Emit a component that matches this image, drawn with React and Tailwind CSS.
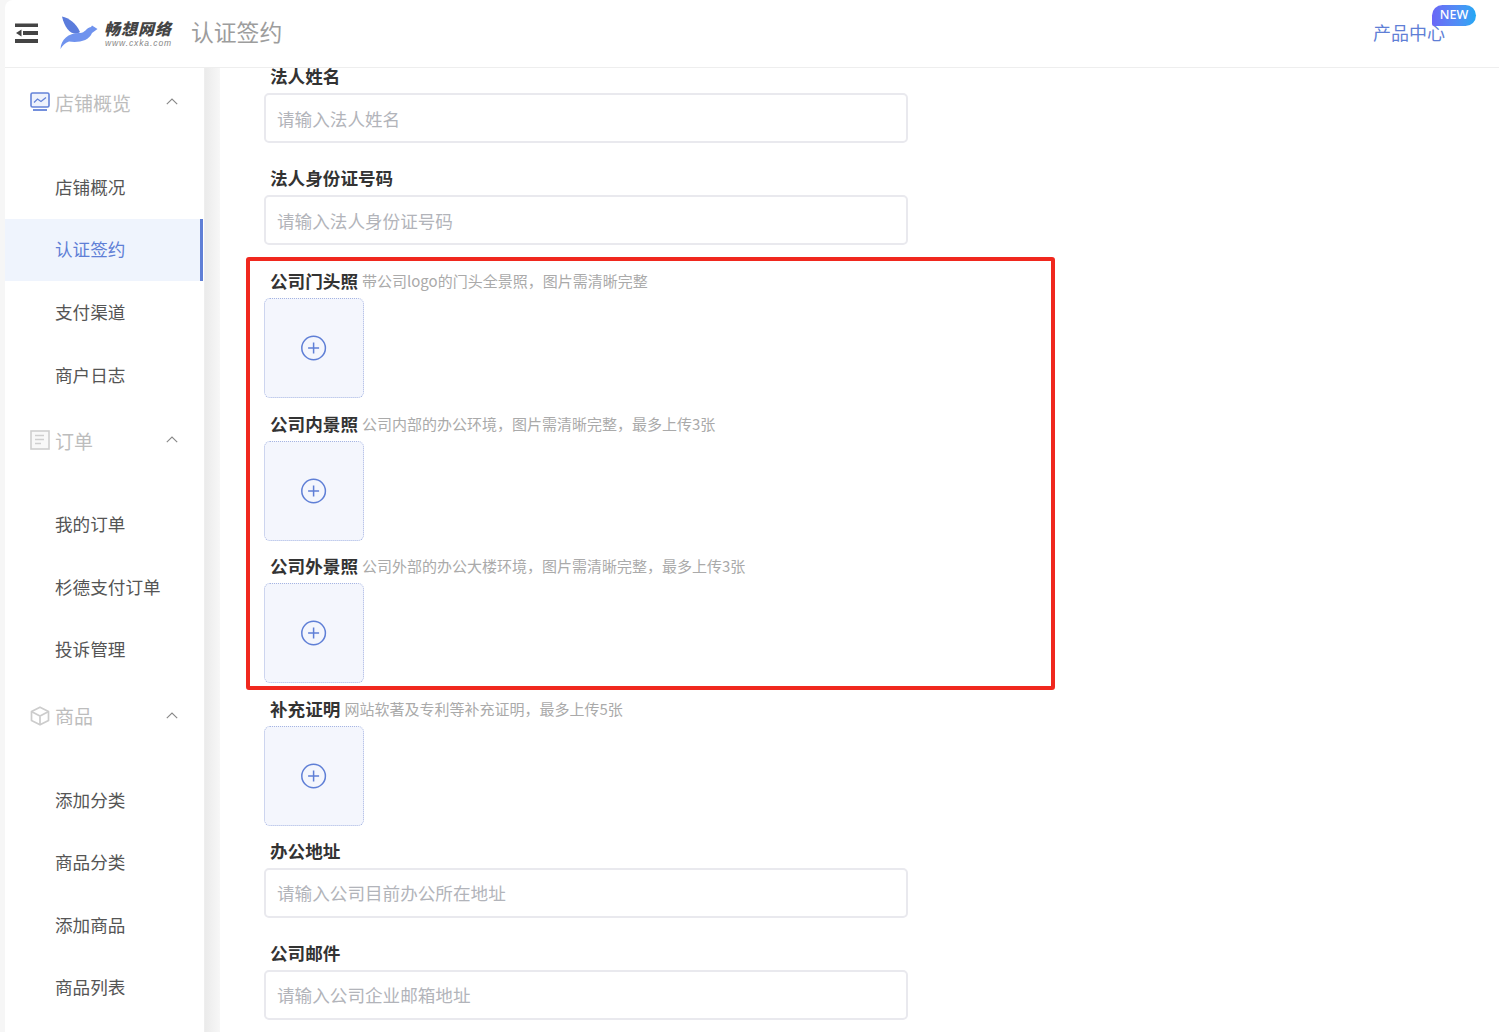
import React from "react";

const Chevron = () => (
  <svg width="12" height="7" viewBox="0 0 12 7" fill="none" stroke="#888" strokeWidth="1.1" className="ml-auto mr-[26px] mb-[1px]">
    <path d="M0.8 6.2 L6 1 L11.2 6.2" />
  </svg>
);

const MonitorIcon = () => (
  <svg width="20" height="20" viewBox="0 0 20 20" fill="none">
    <rect x="1" y="1" width="18" height="14" rx="1.5" fill="#eef2fc" stroke="#6483d8" strokeWidth="1.6" />
    <path d="M4 10.5 L7.5 7 L11 9.5 L16 5.5" stroke="#6483d8" strokeWidth="1.3" />
    <path d="M3 18 H17" stroke="#6483d8" strokeWidth="1.8" />
  </svg>
);

const DocIcon = () => (
  <svg width="20" height="20" viewBox="0 0 20 20" fill="none" stroke="#cfcfcf">
    <rect x="1" y="1" width="18" height="18" fill="#f8f8f8" strokeWidth="1.6" />
    <path d="M5 5.5 H14 M5 9.5 H14 M5 13.5 H11" strokeWidth="1.4" />
  </svg>
);

const BoxIcon = () => (
  <svg width="20" height="20" viewBox="0 0 20 20" fill="none" stroke="#cccccc" strokeWidth="1.7" strokeLinejoin="round">
    <path d="M10 1.2 L18.5 5.5 V14.5 L10 18.8 L1.5 14.5 V5.5 Z" />
    <path d="M1.8 5.8 L10 10 L18.2 5.8 M10 10 V18.5" />
  </svg>
);

const PlusCircle = () => (
  <svg width="26" height="26" viewBox="0 0 26 26" fill="none" stroke="#5f7fd6" strokeWidth="1.5">
    <circle cx="12.6" cy="13" r="11.8" />
    <path d="M12.6 7.5 V18.5 M7.1 13 H18.1" />
  </svg>
);

const Group = ({ icon, title, items, active, headClass }) => (
  <div>
    <div className={headClass}>
      <span className="w-[25px] shrink-0 flex">{icon}</span>
      <span className="text-[19px] text-[#bdbdbd] leading-none">{title}</span>
      <Chevron />
    </div>
    {items.map((t) =>
      t === active ? (
        <div key={t} className="h-[62.5px] mr-[1px] flex items-center pl-[50px] text-[17.6px] text-[#5f7fd6] bg-[#eff4fd] border-r-[3px] border-[#5f7fd6]">
          <span className="-mt-[1px]">{t}</span>
        </div>
      ) : (
        <div key={t} className="h-[62.5px] flex items-center pl-[50px] text-[17.6px] text-[#555555]">
          {t}
        </div>
      )
    )}
  </div>
);

const Label = ({ title, hint }) => (
  <div className="h-[26px] mb-1 pl-[6px] flex items-center whitespace-nowrap">
    <span className="text-[17.6px] font-bold text-[#333333] leading-[26px]">{title}</span>
    {hint && <span className="text-[15px] text-[#aaaaaa] ml-1 leading-[26px]">{hint}</span>}
  </div>
);

const TextField = ({ title, placeholder }) => (
  <div>
    <Label title={title} />
    <input
      readOnly
      placeholder={placeholder}
      className="w-[644px] h-[50px] border-2 border-[#e9e9ee] rounded-[5px] px-[11px] text-[17.6px] bg-white outline-none placeholder:text-[#b2b4ba]"
    />
  </div>
);

const Upload = ({ title, hint }) => (
  <div>
    <Label title={title} hint={hint} />
    <div className="w-[100px] h-[100px] rounded-[6px] border border-dotted border-[#a5b4e2] bg-[#f4f6fd] flex items-center justify-center">
      <PlusCircle />
    </div>
  </div>
);

export default function App() {
  return (
    <div className="h-[1032px] w-full overflow-hidden flex flex-col bg-[#f6f6f6] pl-[5px] font-['Noto_Sans_CJK_SC','Noto_Sans',sans-serif]">
      <header className="h-[68px] shrink-0 pl-[10px] bg-white rounded-tl-[8px] border-b border-[#eeeeee] flex items-center">
        <svg width="24" height="21" viewBox="0 0 24 21" className="mt-[-1px]">
          <path d="M0 0.5 H23 V4 H0 Z M8 8 H23 V12 H8 Z M0 16 H23 V20 H0 Z" fill="#444444" />
          <path d="M1 10 L6.5 6.5 V13.5 Z" fill="#444444" />
        </svg>
        <svg width="38" height="34" viewBox="0 0 38 34" className="ml-[21px] mt-[-1px]">
          <path d="M2 0.5 C9 2 16 7 20 16 C13 21 5 14 2 0.5 Z" fill="#5b7cdc" />
          <path d="M0.5 33 C1 23 9 16.5 20 17 C25 17 26 12 31 11 L32 9.5 L37.5 13 L32 17 C29 25 18 27 9 25.5 C5 27 2.5 29.5 0.5 33 Z" fill="#7093ee" />
        </svg>
        <div className="ml-[6px] -mt-[2px] flex flex-col">
          <span className="text-[16px] font-black italic text-[#444444] leading-[20px] tracking-[1px]">畅想网络</span>
          <span className="text-[8.5px] italic text-[#888888] leading-[10px] tracking-[0.9px] pl-[1px] font-['Liberation_Sans',sans-serif]">www.cxka.com</span>
        </div>
        <span className="ml-[19px] text-[22.8px] text-[#9d9d9d] leading-none -mt-[3px]">认证签约</span>
        <div className="relative ml-auto mr-[54px] text-[18px] text-[#5f7fd6] leading-none -mt-[4px]">
          产品中心
          <span className="absolute -top-[18px] -right-[31px] w-[44px] h-[21px] rounded-[11px] rounded-bl-[2px] bg-gradient-to-r from-[#6a66f6] to-[#1fa8f4] text-white text-[12.5px] font-medium flex items-center justify-center font-['Noto_Sans',sans-serif]">
            NEW
          </span>
        </div>
      </header>

      <div className="flex-1 min-h-0 flex">
        <aside className="w-[200px] shrink-0 bg-white border-r border-[#eeeeee] overflow-hidden">
          <Group headClass="flex items-center h-[68px] pl-[25px] mb-5" icon={<MonitorIcon />} title="店铺概览" active="认证签约" items={["店铺概况", "认证签约", "支付渠道", "商户日志"]} />
          <Group headClass="flex items-center h-[68px] pl-[25px] mb-[19px]" icon={<DocIcon />} title="订单" items={["我的订单", "杉德支付订单", "投诉管理"]} />
          <Group headClass="flex items-center h-[68px] pl-[25px] mt-[1px] mb-[19px]" icon={<BoxIcon />} title="商品" items={["添加分类", "商品分类", "添加商品", "商品列表"]} />
        </aside>
        <div className="w-[15px] shrink-0 bg-gradient-to-r from-[#ebebeb] to-[#f7f7f7]" />
        <main className="flex-1 min-w-0 bg-white overflow-hidden pl-[44px]">
          <div className="-mt-[5px] flex flex-col gap-[22px]">
            <TextField title="法人姓名" placeholder="请输入法人姓名" />
            <TextField title="法人身份证号码" placeholder="请输入法人身份证号码" />
            <div className="relative flex flex-col gap-[12.5px] mt-[1px]">
              <div className="absolute -left-[18px] -top-[11px] w-[809px] h-[433px] border-[4px] border-[#f0281e] rounded-[3px]" />
              <Upload title="公司门头照" hint="带公司logo的门头全景照，图片需清晰完整" />
              <Upload title="公司内景照" hint="公司内部的办公环境，图片需清晰完整，最多上传3张" />
              <Upload title="公司外景照" hint="公司外部的办公大楼环境，图片需清晰完整，最多上传3张" />
              <Upload title="补充证明" hint="网站软著及专利等补充证明，最多上传5张" />
            </div>
            <div className="-mt-[10px]">
              <TextField title="办公地址" placeholder="请输入公司目前办公所在地址" />
            </div>
            <TextField title="公司邮件" placeholder="请输入公司企业邮箱地址" />
          </div>
        </main>
      </div>
    </div>
  );
}
